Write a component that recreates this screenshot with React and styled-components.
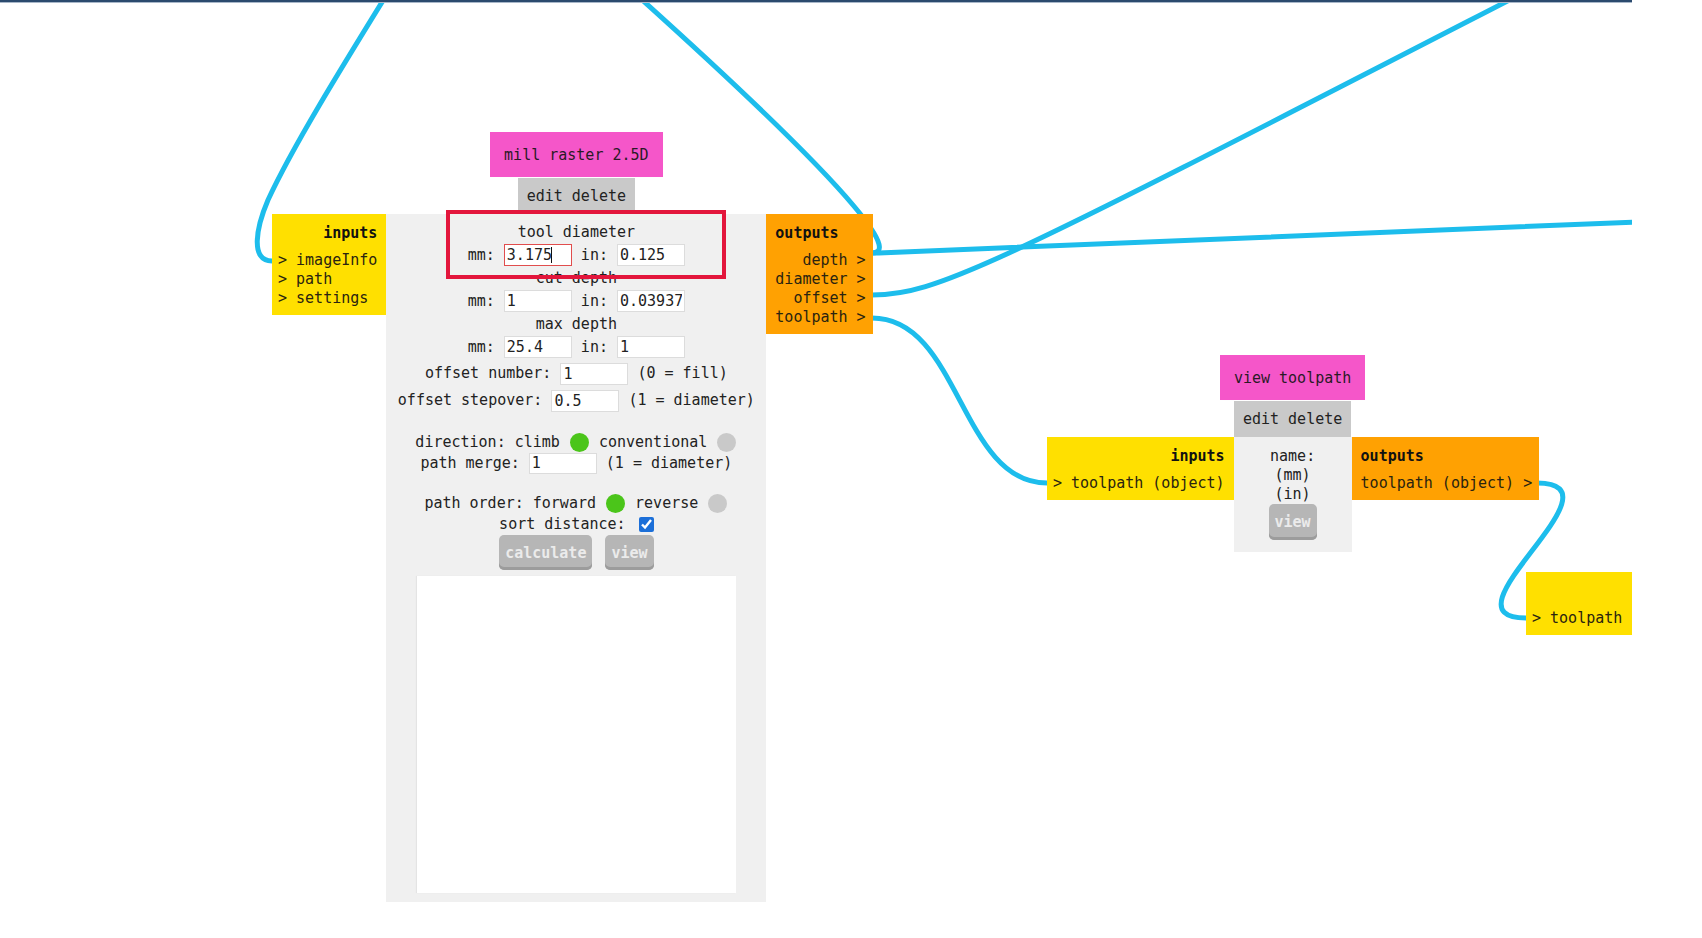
import React from 'react';
import styled, { createGlobalStyle } from 'styled-components';

const GlobalStyle = createGlobalStyle`
  html, body {
    margin: 0;
    padding: 0;
    background: #fff;
  }
  body {
    font-family: "DejaVu Sans Mono", "Liberation Mono", monospace;
    font-size: 15px;
    color: #222;
  }
`;

const MONO = `"DejaVu Sans Mono", "Liberation Mono", monospace`;

const Canvas = styled.div`
  position: relative;
  width: 1632px;
  height: 938px;
  overflow: hidden;
  background: #fff;
`;

const TopBar = styled.div`
  position: absolute;
  left: 0;
  top: 0;
  width: 100%;
  height: 2px;
  background: #2b4a6e;
  border-bottom: 1px solid #a8b7c9;
  z-index: 3;
`;

const Wires = styled.svg`
  position: absolute;
  left: 0;
  top: 0;
  width: 1632px;
  height: 938px;
`;

const Node = styled.div`
  position: absolute;
  left: ${p => p.$x}px;
  top: ${p => p.$y}px;
  display: grid;
  grid-template-columns: auto ${p => p.$w}px auto;
  align-items: start;
  line-height: 19px;
  white-space: pre;
`;

const Head = styled.div`
  grid-column: 2;
  grid-row: 1;
  display: flex;
  flex-direction: column;
  align-items: center;
`;

const Title = styled.div`
  flex-shrink: 0;
  height: 45px;
  line-height: 46px;
  padding: 0 14px;
  background: #f556c9;
  color: #2a1a26;
  margin-bottom: 1px;
`;

const EditBar = styled.div`
  flex-shrink: 0;
  height: 36px;
  line-height: 36px;
  padding: 0 9px;
  background: #c9c9c9;
  color: #222;
`;

const Ports = styled.div`
  grid-column: ${p => (p.$out ? 3 : 1)};
  grid-row: ${p => p.$row || 2};
  min-width: ${p => p.$minW || 0}px;
  box-sizing: border-box;
  background: ${p => (p.$out ? '#ffa102' : '#ffe000')};
  padding: ${p => (p.$out ? '9px 7px 7px 9px' : '9px 9px 7px 6px')};
  text-align: ${p => (p.$out ? 'right' : 'left')};
  color: #2a2410;
`;

const PortsHead = styled.div`
  font-weight: bold;
  height: 20px;
  line-height: 21px;
  margin-bottom: 8px;
  text-align: ${p => (p.$out ? 'left' : 'right')};
  color: #111;
`;

const Panel = styled.div`
  grid-column: 2;
  grid-row: 2;
  background: #f0f0f0;
  display: flex;
  flex-direction: column;
  align-items: center;
  padding: ${p => p.$pad || '8px 0 9px'};
`;

const Line = styled.div`
  display: flex;
  align-items: center;
  justify-content: center;
  height: ${p => p.$h}px;
  margin-top: ${p => p.$mt || 0}px;
  white-space: pre;
  gap: ${p => p.$gap || 0}px;
`;

const Field = styled.input`
  width: 68px;
  height: ${p => p.$h || 22}px;
  box-sizing: border-box;
  margin: 0;
  padding: 0 2px;
  border: 1px solid ${p => (p.$focus ? '#e14d4d' : '#dcdcdc')};
  background: #fff;
  font: 15px ${MONO};
  color: #222;
  outline: none;
`;

const FocusWrap = styled.span`
  position: relative;
  display: inline-flex;
`;

const Caret = styled.span`
  position: absolute;
  left: 47px;
  top: 3px;
  width: 1px;
  height: 16px;
  background: #111;
`;

const Dot = styled.span`
  display: inline-block;
  width: 19px;
  height: 19px;
  margin: 0 1px;
  border-radius: 50%;
  background: ${p => (p.$on ? '#4bc51a' : '#c9c9c9')};
`;

const Check = styled.input`
  width: 15px;
  height: 15px;
  margin: 0 0 0 4px;
  accent-color: #1c6fd8;
`;

const Btn = styled.button`
  height: ${p => p.$h || 35}px;
  padding: 0 6px;
  border: none;
  border-radius: 5px;
  background: #b6b6b6;
  box-shadow: inset 0 -3px 0 #9c9c9c;
  color: #ebebeb;
  font: bold 15px ${MONO};
`;

const Preview = styled.div`
  width: 319px;
  height: 317px;
  margin-top: 6px;
  background: #fff;
  box-shadow: -1px 0 1px #e4e4e4;
`;

const Highlight = styled.div`
  position: absolute;
  left: 446px;
  top: 210px;
  width: 280px;
  height: 69px;
  box-sizing: border-box;
  border: 4px solid #e3163c;
  z-index: 2;
`;

const wires = [
  'M 272 261 C 250 261, 256 228, 268 200 C 292 148, 340 70, 392 -14',
  'M 872 253 C 893 253, 886 218, 620 -20',
  'M 872 253 C 930 253, 960 248, 1660 221',
  'M 872 295 C 940 295, 1000 262, 1560 -26',
  'M 872 318 C 960 318, 960 483, 1047 483',
  'M 1537 483 C 1630 483, 1435 618, 1526 618',
];

function PairRow({ mm, inch, focus }) {
  return (
    <Line $h={26}>
      {'mm: '}
      {focus ? (
        <FocusWrap>
          <Field $focus readOnly value={mm} />
          <Caret />
        </FocusWrap>
      ) : (
        <Field readOnly value={mm} />
      )}
      {' in: '}
      <Field readOnly value={inch} />
    </Line>
  );
}

function MillRaster() {
  return (
    <Node $x={272} $y={132} $w={380}>
      <Head>
        <Title>mill raster 2.5D</Title>
        <EditBar>edit delete</EditBar>
      </Head>
      <Ports>
        <PortsHead>inputs</PortsHead>
        <div>{'> imageInfo'}</div>
        <div>{'> path'}</div>
        <div>{'> settings'}</div>
      </Ports>
      <Panel>
        <Line $h={20}>tool diameter</Line>
        <PairRow mm="3.175" inch="0.125" focus />
        <Line $h={20}>cut depth</Line>
        <PairRow mm="1" inch="0.03937" />
        <Line $h={20}>max depth</Line>
        <PairRow mm="25.4" inch="1" />
        <Line $h={27}>
          {'offset number: '}
          <Field readOnly value="1" />
          {' (0 = fill)'}
        </Line>
        <Line $h={27}>
          {'offset stepover: '}
          <Field readOnly value="0.5" />
          {' (1 = diameter)'}
        </Line>
        <Line $h={20} $mt={18}>
          {'direction: climb '}
          <Dot $on />
          {' conventional '}
          <Dot />
        </Line>
        <Line $h={22}>
          {'path merge: '}
          <Field readOnly value="1" $h={21} />
          {' (1 = diameter)'}
        </Line>
        <Line $h={20} $mt={19}>
          {'path order: forward '}
          <Dot $on />
          {' reverse '}
          <Dot />
        </Line>
        <Line $h={22}>
          {'sort distance: '}
          <Check type="checkbox" defaultChecked />
        </Line>
        <Line $h={35} $gap={13}>
          <Btn>calculate</Btn>
          <Btn>view</Btn>
        </Line>
        <Preview />
      </Panel>
      <Ports $out>
        <PortsHead $out>outputs</PortsHead>
        <div>{'depth >'}</div>
        <div>{'diameter >'}</div>
        <div>{'offset >'}</div>
        <div>{'toolpath >'}</div>
      </Ports>
    </Node>
  );
}

function ViewToolpath() {
  return (
    <Node $x={1047} $y={355} $w={118}>
      <Head>
        <Title>view toolpath</Title>
        <EditBar>edit delete</EditBar>
      </Head>
      <Ports>
        <PortsHead>inputs</PortsHead>
        <div>{'> toolpath (object)'}</div>
      </Ports>
      <Panel $pad="10px 0 12px">
        <div>name:</div>
        <div>(mm)</div>
        <div>(in)</div>
        <Btn $h={36}>view</Btn>
      </Panel>
      <Ports $out>
        <PortsHead $out>outputs</PortsHead>
        <div>{'toolpath (object) >'}</div>
      </Ports>
    </Node>
  );
}

function ToolpathSink() {
  return (
    <Node $x={1526} $y={572} $w={0}>
      <Ports $minW={200} $row={1}>
        <PortsHead />
        <div>{'> toolpath'}</div>
      </Ports>
    </Node>
  );
}

export default function App() {
  return (
    <>
      <GlobalStyle />
      <Canvas>
        <Wires viewBox="0 0 1632 938">
          {wires.map((d, i) => (
            <path key={i} d={d} fill="none" stroke="#1dbdec" strokeWidth="5" strokeLinecap="round" />
          ))}
        </Wires>
        <MillRaster />
        <ViewToolpath />
        <ToolpathSink />
        <Highlight />
        <TopBar />
      </Canvas>
    </>
  );
}
